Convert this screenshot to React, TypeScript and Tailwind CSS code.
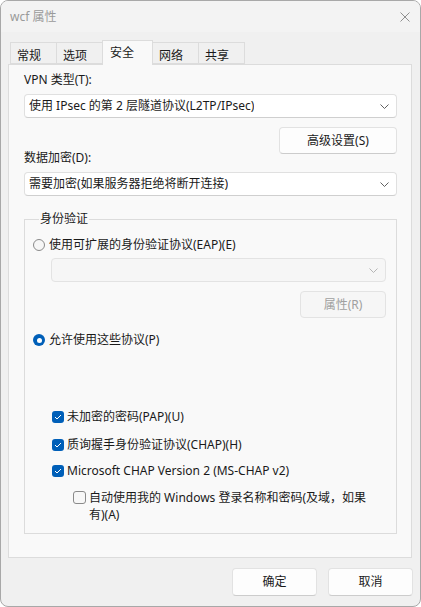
import React from "react";

const font = { fontFamily: '"Noto Sans", "Noto Sans CJK SC", sans-serif' };

const Chevron = ({ disabled = false }: { disabled?: boolean }) => (
  <svg width="9" height="5" viewBox="0 0 9 5" className="shrink-0">
    <path d="M0.5 0.5 L4.5 4.5 L8.5 0.5" fill="none" stroke={disabled ? "#b5b5b5" : "#606060"} strokeWidth="1" />
  </svg>
);

const Select = ({ value, disabled = false, className = "" }: { value?: string; disabled?: boolean; className?: string }) => (
  <div
    className={`flex h-[24px] items-center justify-between rounded-[4px] border pl-[4px] pr-[7px] ${
      disabled ? "border-[#e3e3e3] bg-[#f6f6f6]" : "border-[#e0e0e0] border-b-[#cfcfcf] bg-white"
    } ${className}`}
  >
    <span className="truncate text-[12px] leading-[16px] text-[#1a1a1a]">{value}</span>
    <Chevron disabled={disabled} />
  </div>
);

const Button = ({ label, disabled = false, className = "" }: { label: string; disabled?: boolean; className?: string }) => (
  <div
    className={`flex h-[27px] items-center justify-center rounded-[4px] border text-[12px] leading-[16px] ${
      disabled
        ? "border-[#e3e3e3] bg-[#f6f6f6] text-[#a0a0a0]"
        : "border-[#e2e2e2] border-b-[#cccccc] bg-[#fdfdfd] text-[#1a1a1a]"
    } ${className}`}
  >
    {label}
  </div>
);

const Radio = ({ checked = false }: { checked?: boolean }) =>
  checked ? (
    <span className="flex h-[12px] w-[12px] shrink-0 items-center justify-center rounded-full bg-[#005fb8]">
      <span className="h-[5px] w-[5px] rounded-full bg-white" />
    </span>
  ) : (
    <span className="h-[12px] w-[12px] shrink-0 rounded-full border border-[#8a8a8a] bg-[#f6f6f6]" />
  );

const Check = ({ checked = false }: { checked?: boolean }) =>
  checked ? (
    <span className="flex h-[12px] w-[12px] shrink-0 items-center justify-center rounded-[3px] bg-[#005fb8]">
      <svg width="8" height="6" viewBox="0 0 8 6">
        <path d="M1 3 L3 5 L7 1" fill="none" stroke="white" strokeWidth="1" />
      </svg>
    </span>
  ) : (
    <span className="block h-[13px] w-[13px] shrink-0 rounded-[3px] border border-[#8a8a8a] bg-[#f7f7f7]" />
  );

const tabs = ["常规", "选项", "安全", "网络", "共享"];

export default function App() {
  return (
    <div className="h-[607px] w-[421px] bg-white" style={font}>
      <div className="flex h-[607px] w-[421px] flex-col overflow-hidden rounded-[8px] border border-[#a8a8a8] bg-[#f0f0f0] text-[12px] leading-[16px] text-[#1a1a1a]">
        {/* title bar */}
        <div className="flex h-[31px] items-center justify-between bg-[#f3f3f3] pl-[9px] pr-[10px]">
          <span className="text-[12px] text-[#9a9a9a]">wcf 属性</span>
          <svg width="10" height="10" viewBox="0 0 10 10">
            <path d="M0.5 0.5 L9.5 9.5 M9.5 0.5 L0.5 9.5" stroke="#8f8f8f" strokeWidth="1" />
          </svg>
        </div>

        {/* tabs */}
        <div className="mt-[8px] flex h-[24px] items-end pl-[9px]">
          {tabs.map((t, i) =>
            i === 2 ? (
              <div
                key={t}
                className="relative z-10 -mb-[1px] -ml-[1px] -mr-[1px] flex h-[25px] w-[51px] items-start border border-b-0 border-[#dcdcdc] bg-[#f9f9f9] pl-[7px] pt-[4px]"
              >
                {t}
              </div>
            ) : (
              <div
                key={t}
                className={`flex h-[22px] w-[47px] items-start border border-[#dcdcdc] bg-[#f0f0f0] pl-[6px] pt-[5px] ${i > 0 && i !== 3 ? "-ml-[1px]" : ""}`}
              >
                {t}
              </div>
            )
          )}
        </div>

        {/* panel */}
        <div className="ml-[7px] flex h-[494px] w-[404px] flex-col border border-[#dcdcdc] bg-[#f9f9f9] pl-[15px] pr-[14px]">
          <div className="mt-[7px]">VPN 类型(T):</div>
          <Select className="mt-[6px]" value="使用 IPsec 的第 2 层隧道协议(L2TP/IPsec)" />
          <div className="mt-[9px] flex justify-end">
            <Button label="高级设置(S)" className="w-[118px]" />
          </div>
          <div className="-mt-[4px]">数据加密(D):</div>
          <Select className="mt-[6px]" value="需要加密(如果服务器拒绝将断开连接)" />

          <fieldset className="mt-[15px] border border-[#dcdcdc] pb-[10px] pl-[8px] pr-[10px] pt-[10px]">
            <legend className="ml-[6px] px-[1px] leading-[16px]">身份验证</legend>
            <div className="flex items-center gap-[4px]">
              <Radio />
              <span>使用可扩展的身份验证协议(EAP)(E)</span>
            </div>
            <Select disabled className="ml-[18px] mt-[5px]" />
            <div className="mt-[9px] flex justify-end">
              <Button disabled label="属性(R)" className="w-[86px]" />
            </div>
            <div className="mt-[14px] flex items-center gap-[4px]">
              <Radio checked />
              <span>允许使用这些协议(P)</span>
            </div>

            <div className="ml-[19px] mt-[61px] flex items-center gap-[3px]">
              <Check checked />
              <span>未加密的密码(PAP)(U)</span>
            </div>
            <div className="ml-[19px] mt-[12px] flex items-center gap-[3px]">
              <Check checked />
              <span>质询握手身份验证协议(CHAP)(H)</span>
            </div>
            <div className="ml-[19px] mt-[10px] flex items-center gap-[3px]">
              <Check checked />
              <span>Microsoft CHAP Version 2 (MS-CHAP v2)</span>
            </div>
            <div className="ml-[40px] mt-[10px] flex items-start gap-[3px] pr-[16px]">
              <div className="mt-[2px] flex shrink-0">
                <Check />
              </div>
              <span className="leading-[17px]">自动使用我的 Windows 登录名称和密码(及域，如果有)(A)</span>
            </div>
          </fieldset>
        </div>

        {/* footer */}
        <div className="mr-[7px] mt-[10px] flex justify-end gap-[11px]">
          <Button label="确定" className="h-[28px] w-[85px]" />
          <Button label="取消" className="h-[28px] w-[85px]" />
        </div>
      </div>
    </div>
  );
}
